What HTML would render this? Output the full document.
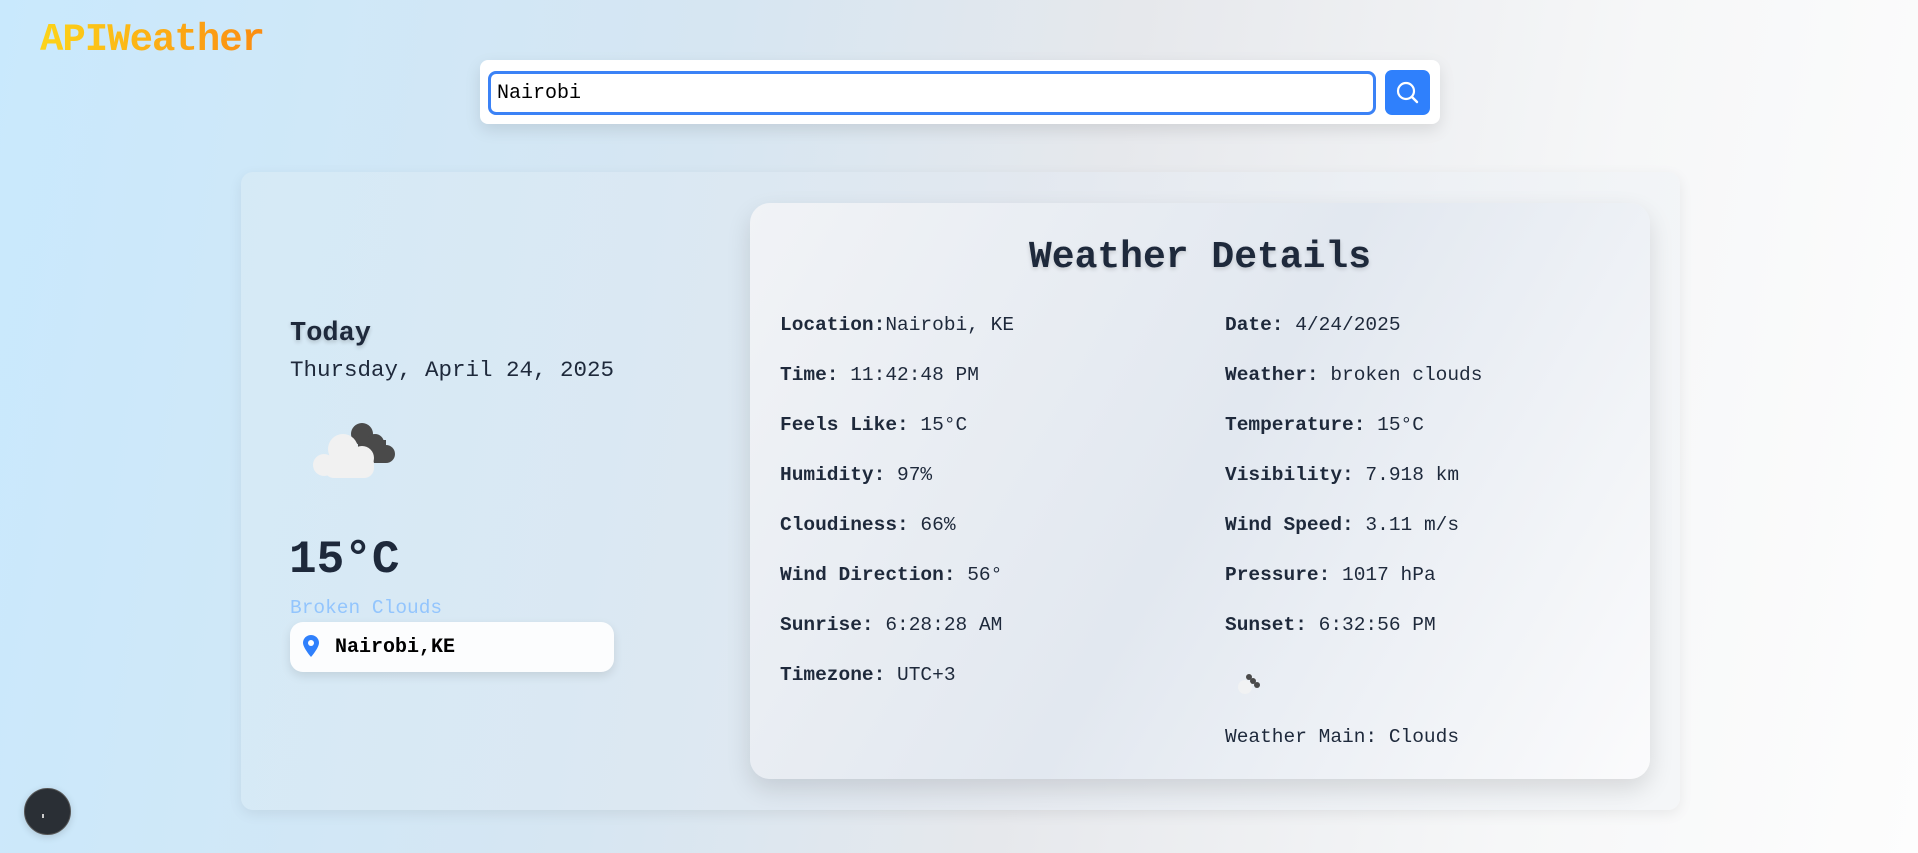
<!DOCTYPE html>
<html><head><meta charset="utf-8"><style>
*{margin:0;padding:0;box-sizing:border-box}
html,body{width:1918px;height:853px;overflow:hidden}
body{position:relative;font-family:"Liberation Mono",monospace;color:#1e293b;
background:linear-gradient(100deg,#c9e9fd 0%,#d6e6f2 35%,#e6e8ec 55%,#f6f7f8 80%,#fdfdfd 100%)}
.logo{position:absolute;left:40px;top:18px;font-size:39px;font-weight:bold;letter-spacing:-1px;
background:linear-gradient(90deg,#fcd419,#fb8c12);-webkit-background-clip:text;color:transparent}
.search{position:absolute;left:480px;top:60px;width:960px;height:64px;background:#fff;border-radius:8px;box-shadow:0 6px 16px rgba(0,0,0,.1)}
.inp{position:absolute;left:8px;top:11px;width:888px;height:44px;border:3px solid #3b82f6;border-radius:8px;font-size:20px;line-height:40px;padding-left:6px;color:#000}
.btn{position:absolute;left:905px;top:10px;width:45px;height:45px;background:#2f80fc;border-radius:7px}
.card{position:absolute;left:241px;top:172px;width:1439px;height:638px;border-radius:12px;
background:linear-gradient(100deg,rgba(214,234,246,.9),rgba(226,232,240,.7) 50%,rgba(244,246,248,.9));box-shadow:0 4px 14px rgba(0,0,0,.07)}
.det{position:absolute;left:750px;top:203px;width:900px;height:576px;border-radius:20px;
background:linear-gradient(120deg,#f1f3f6 0%,#e2e8f0 50%,#fbfbfc 100%);box-shadow:0 10px 25px rgba(0,0,0,.12)}
.det h2{position:absolute;left:0;width:100%;top:33px;text-align:center;font-size:38px;font-weight:bold;text-shadow:0 2px 4px rgba(0,0,0,.15)}
.r{position:absolute;font-size:19.5px;white-space:nowrap}
.r b{font-weight:bold}
.abs{position:absolute;white-space:nowrap}
</style></head><body>
<div class="logo">APIWeather</div>
<div class="search"><div class="inp">Nairobi</div>
<div class="btn"><svg width="45" height="45" viewBox="0 0 45 45"><circle cx="21" cy="21" r="8" fill="none" stroke="#fff" stroke-width="2.2"/><path d="M27 27l5 5" stroke="#fff" stroke-width="2.4" stroke-linecap="round"/></svg></div></div>
<div class="card"></div>
<div class="abs" style="left:290px;top:319px;font-size:27px;font-weight:bold;text-shadow:0 2px 4px rgba(0,0,0,.2)">Today</div>
<div class="abs" style="left:290px;top:357px;font-size:22.5px">Thursday, April 24, 2025</div>
<svg class="abs" style="left:306px;top:418px" width="100" height="62" viewBox="0 0 96 62">
<g fill="#4a4a4a"><circle cx="54" cy="16" r="11"/><circle cx="67" cy="25" r="9"/><circle cx="78" cy="36" r="9"/><rect x="50" y="22" width="28" height="23"/></g>
<g fill="#f1f1f1"><circle cx="35" cy="31" r="15"/><circle cx="54" cy="40" r="12"/><circle cx="16" cy="47" r="11"/><rect x="16" y="36" width="50" height="24" rx="10"/></g></svg>
<div class="abs" style="left:289px;top:534px;font-size:46px;font-weight:bold">15°C</div>
<div class="abs" style="left:290px;top:597px;font-size:19.5px;color:#93c5fd">Broken Clouds</div>
<div class="abs" style="left:290px;top:622px;width:324px;height:50px;background:#fcfdfe;border-radius:13px;box-shadow:0 4px 10px rgba(0,0,0,.1)">
<svg style="position:absolute;left:13px;top:13px" width="16" height="24" viewBox="0 0 16 24"><path d="M8 0C3.6 0 0 3.5 0 7.8 0 13 8 22 8 22s8-9 8-14.2C16 3.5 12.4 0 8 0z" fill="#2f80fc"/><circle cx="8" cy="8" r="3" fill="#fff"/></svg>
<div style="position:absolute;left:45px;top:14px;font-size:20px;font-weight:bold;color:#000">Nairobi,KE</div></div>
<div class="det"><h2>Weather Details</h2></div>
<div class="r" style="left:780px;top:314px"><b>Location:</b>Nairobi, KE</div>
<div class="r" style="left:780px;top:364px"><b>Time:</b> 11:42:48 PM</div>
<div class="r" style="left:780px;top:414px"><b>Feels Like:</b> 15°C</div>
<div class="r" style="left:780px;top:464px"><b>Humidity:</b> 97%</div>
<div class="r" style="left:780px;top:514px"><b>Cloudiness:</b> 66%</div>
<div class="r" style="left:780px;top:564px"><b>Wind Direction:</b> 56°</div>
<div class="r" style="left:780px;top:614px"><b>Sunrise:</b> 6:28:28 AM</div>
<div class="r" style="left:780px;top:664px"><b>Timezone:</b> UTC+3</div>
<div class="r" style="left:1225px;top:314px"><b>Date:</b> 4/24/2025</div>
<div class="r" style="left:1225px;top:364px"><b>Weather:</b> broken clouds</div>
<div class="r" style="left:1225px;top:414px"><b>Temperature:</b> 15°C</div>
<div class="r" style="left:1225px;top:464px"><b>Visibility:</b> 7.918 km</div>
<div class="r" style="left:1225px;top:514px"><b>Wind Speed:</b> 3.11 m/s</div>
<div class="r" style="left:1225px;top:564px"><b>Pressure:</b> 1017 hPa</div>
<div class="r" style="left:1225px;top:614px"><b>Sunset:</b> 6:32:56 PM</div>
<svg class="abs" style="left:1235px;top:672px" width="30" height="30" viewBox="0 0 30 30"><g fill="#4a4a4a"><circle cx="14" cy="5" r="3"/><circle cx="18" cy="9" r="3"/><circle cx="22" cy="13" r="3"/></g><circle cx="10" cy="15" r="7" fill="#f3f3f3" opacity=".8"/></svg>
<div class="r" style="left:1225px;top:726px">Weather Main: Clouds</div>
<div class="abs" style="left:24px;top:788px;width:47px;height:47px;border-radius:50%;background:#2a2f35;border:1px solid #555;box-shadow:0 2px 8px rgba(0,0,0,.15)"><div style="position:absolute;left:17px;top:25px;width:2px;height:4px;background:#ccc"></div></div>
</body></html>
